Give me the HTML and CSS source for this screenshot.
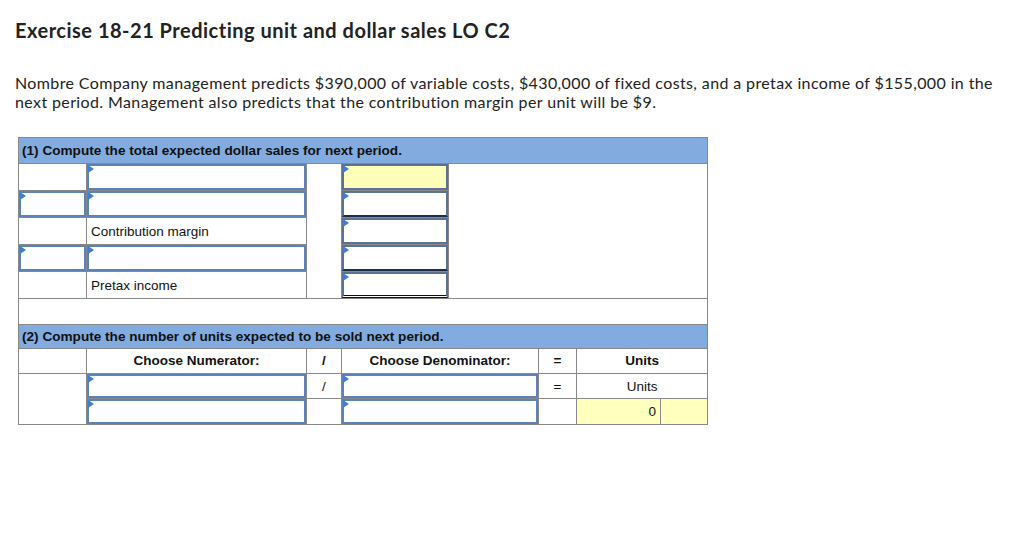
FILE: index.html
```html
<!DOCTYPE html>
<html>
<head>
<meta charset="utf-8">
<link rel="stylesheet" href="styles.css">
</head>
<body>
<div class="page">
  <h1 class="title">Exercise 18-21 Predicting unit and dollar sales LO C2</h1>
  <p class="intro">Nombre Company management predicts $390,000 of variable costs, $430,000 of fixed costs, and a pretax income of $155,000 in the next period. Management also predicts that the contribution margin per unit will be $9.</p>

  <table class="sheet">
    <colgroup>
      <col class="c1"><col class="c2"><col class="c3"><col class="c4"><col class="c5"><col class="c6"><col class="c7"><col class="c8">
    </colgroup>
    <tr class="hdr h1row"><td colspan="8">(1) Compute the total expected dollar sales for next period.</td></tr>
    <tr class="r1">
      <td></td>
      <td class="in"><div class="inp"></div></td>
      <td rowspan="5"></td>
      <td class="in"><div class="inp amt yellow"></div></td>
      <td rowspan="5" colspan="4"></td>
    </tr>
    <tr class="r1">
      <td class="in"><div class="inp"></div></td>
      <td class="in"><div class="inp"></div></td>
      <td class="in"><div class="inp amt under"></div></td>
    </tr>
    <tr class="r1">
      <td></td>
      <td class="lbl">Contribution margin</td>
      <td class="in"><div class="inp amt"></div></td>
    </tr>
    <tr class="r1">
      <td class="in"><div class="inp"></div></td>
      <td class="in"><div class="inp"></div></td>
      <td class="in"><div class="inp amt under"></div></td>
    </tr>
    <tr class="r1">
      <td></td>
      <td class="lbl">Pretax income</td>
      <td class="in"><div class="inp amt total"></div></td>
    </tr>
    <tr class="blank"><td colspan="8">&nbsp;</td></tr>
    <tr class="hdr h2row"><td colspan="8">(2) Compute the number of units expected to be sold next period.</td></tr>
    <tr class="r2 colhead">
      <td></td>
      <td class="ctr">Choose Numerator:</td>
      <td class="ctr">/</td>
      <td class="ctr" colspan="2">Choose Denominator:</td>
      <td class="ctr">=</td>
      <td class="ctr" colspan="2">Units</td>
    </tr>
    <tr class="r2">
      <td rowspan="2"></td>
      <td class="in"><div class="inp"></div></td>
      <td class="ctr">/</td>
      <td class="in" colspan="2"><div class="inp"></div></td>
      <td class="ctr">=</td>
      <td class="ctr" colspan="2">Units</td>
    </tr>
    <tr class="r3">
      <td class="in"><div class="inp"></div></td>
      <td></td>
      <td class="in" colspan="2"><div class="inp"></div></td>
      <td></td>
      <td class="yel num">0</td>
      <td class="yel"></td>
    </tr>
  </table>
</div>
</body>
</html>
```

FILE: styles.css
```css
html, body {
  margin: 0;
  padding: 0;
  background: #ffffff;
}

.page {
  padding: 17px 0 0 15px;
}

.title {
  margin: 0;
  font-family: Lato, "Open Sans", sans-serif;
  font-weight: 700;
  font-size: 20px;
  letter-spacing: 0.5px;
  line-height: 26px;
  color: #222222;
}

.intro {
  margin: 30px 0 0 0;
  width: 995px;
  font-family: Lato, "Open Sans", sans-serif;
  font-size: 16px;
  letter-spacing: 0.38px;
  line-height: 19px;
  color: #222222;
}

.sheet {
  margin: 26px 0 0 3px;
  border-collapse: collapse;
  table-layout: fixed;
  width: 689px;
  border: 1px solid #888888;
  font-family: "Liberation Sans", Arial, sans-serif;
  font-size: 13.5px;
  color: #111111;
}

.sheet col.c1 { width: 68px; }
.sheet col.c2 { width: 220px; }
.sheet col.c3 { width: 35px; }
.sheet col.c4 { width: 107px; }
.sheet col.c5 { width: 90px; }
.sheet col.c6 { width: 38px; }
.sheet col.c7 { width: 84px; }
.sheet col.c8 { width: 47px; }

.sheet td {
  border: 1px solid #888888;
  padding: 0;
  vertical-align: middle;
  line-height: 15px;
}

.hdr td {
  background: #82abe0;
  font-weight: 700;
  font-size: 13.6px;
  padding: 0 3px;
}

.h1row td { line-height: 25px; }
.h2row td { line-height: 23px; }
.blank td { line-height: 25px; }
.colhead td { line-height: 24px; font-weight: 700; }

.lbl {
  padding: 0 4px !important;
}

.ctr {
  text-align: center;
}

.num {
  text-align: right;
  padding-right: 4px !important;
}

.yel {
  background: #ffffbe;
}

.sheet td.in {
  padding: 0;
  vertical-align: top;
}

.inp {
  position: relative;
  box-sizing: border-box;
  height: 26px;
  border: 2px solid #5c82bd;
  background: #ffffff;
}

.r2 .inp { height: 24px; }
.r3 .inp { height: 25px; }

.inp::before {
  content: "";
  position: absolute;
  left: -1px;
  top: -1px;
  width: 0;
  height: 0;
  border-top: 4px solid transparent;
  border-bottom: 4px solid transparent;
  border-left: 6px solid #3f7ed0;
}

.inp.amt {
  border-color: #5b7197;
}

.inp.yellow {
  background: #ffffb9;
}

.inp.under {
  border-bottom-color: #1d2d4a;
}

.inp.total {
  border-bottom: 3px double #111111;
}
```
